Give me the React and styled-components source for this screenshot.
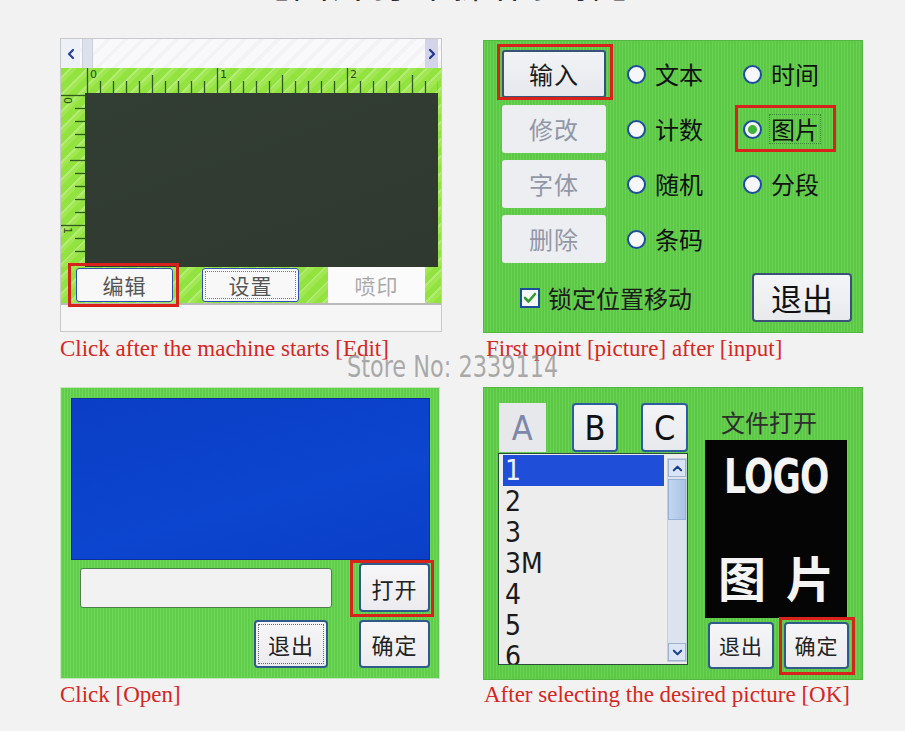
import React from "react";
import styled, { createGlobalStyle, css } from "styled-components";

const CJK = `"Noto Sans CJK SC", "Noto Sans", sans-serif`;
const NARROW = `"Liberation Sans Narrow", "DejaVu Sans Condensed", "Liberation Sans", Arial, sans-serif`;
const RED = "#d8221c";

const GlobalStyle = createGlobalStyle`
  html, body { margin: 0; padding: 0; background: #f2f2f2; }
  body { font-family: ${CJK}; }
  * { box-sizing: border-box; }
`;

const Page = styled.div`
  position: relative;
  width: 905px;
  height: 731px;
  overflow: hidden;
  background: #f2f2f2;
`;

const TitleClip = styled.div`
  height: 38px;
  overflow: hidden;
  display: flex;
  justify-content: center;
`;

const Title = styled.h1`
  margin: -38px 0 0;
  font: 400 36px/40px ${CJK};
  letter-spacing: 4px;
  color: #2a2a2a;
  white-space: nowrap;
`;

const Board = styled.div`
  display: grid;
  grid-template-columns: 382px 380px;
  grid-template-rows: 349px auto;
  column-gap: 41px;
  padding-left: 60px;
`;

const Cell = styled.div`
  display: flex;
  flex-direction: column;
  align-items: flex-start;
  padding-top: ${(p) => p.$offset || 0}px;
`;

const Caption = styled.p`
  margin: ${(p) => (p.$gap ?? 4)}px 0 0 ${(p) => p.$indent || 0}px;
  font: 23px/26px "Liberation Serif", "Times New Roman", serif;
  color: #d7261e;
  white-space: nowrap;
`;

const Watermark = styled.div`
  position: absolute;
  left: 347px;
  top: 350px;
  font: 30px/34px ${NARROW};
  color: rgba(140, 140, 140, 0.72);
  white-space: nowrap;
  transform: scaleX(0.83);
  transform-origin: left center;
  pointer-events: none;
`;

const Highlight = styled.div`
  position: relative;
  display: flex;
  &::after {
    content: "";
    position: absolute;
    inset: ${(p) => p.$inset};
    border: 3px solid ${RED};
    pointer-events: none;
  }
`;

const limeStripes = css`
  background-color: #96e445;
  background-image: repeating-linear-gradient(
    135deg,
    #92e240 0 6px,
    #b3ec74 6px 8px,
    #a0e752 8px 12px
  );
`;

const greenTexture = css`
  background-color: #5fcf48;
  background-image: repeating-linear-gradient(
    90deg,
    rgba(255, 255, 255, 0.07) 0 1px,
    rgba(0, 0, 0, 0.035) 1px 3px
  );
`;

/* ---------- Editor panel (top left) ---------- */

const EditorPanel = styled.div`
  width: 382px;
  height: 294px;
  border: 1px solid #c9c9cc;
  background: #f7f7f7;
  display: flex;
  flex-direction: column;
`;

const ScrollRow = styled.div`
  height: 29px;
  display: flex;
  padding-right: 3px;
  background: repeating-linear-gradient(135deg, #f9f9fb 0 8px, #f3f3f6 8px 12px);
`;

const ScrollArrow = styled.div`
  width: ${(p) => (p.$alt ? 13 : 19)}px;
  display: flex;
  align-items: center;
  justify-content: center;
  background: ${(p) => (p.$alt ? "#d3d3ea" : "#edf0f7")};
`;

const ScrollThumb = styled.div`
  width: 11px;
  margin-left: 2px;
  background: #dde1ea;
  border-left: 1px solid #cbd0dc;
  border-right: 1px solid #cbd0dc;
`;

const ScrollSpace = styled.div`
  flex: 1;
`;

const RulerArea = styled.div`
  display: grid;
  grid-template-columns: 24px 353px 1fr;
  grid-template-rows: 25px 174px;
  ${limeStripes};
`;

const RulerCorner = styled.div`
  grid-column: 1;
  grid-row: 1;
`;

const Screen = styled.div`
  grid-column: 2;
  grid-row: 2;
  background: linear-gradient(160deg, #323d33, #2f3930);
`;

const ButtonRow = styled.div`
  height: 36px;
  display: flex;
  align-items: center;
  gap: 29px;
  padding-left: 15px;
  ${limeStripes};
`;

const EditorButton = styled.div`
  width: 97px;
  height: 34px;
  display: flex;
  align-items: center;
  justify-content: center;
  background: #f8f8f8;
  border: 1px solid #2b50b4;
  border-radius: 3px;
  font: 21px/1 ${CJK};
  color: #555;
  letter-spacing: 1px;
  ${(p) =>
    p.$focus &&
    css`
      outline: 1px dotted #777;
      outline-offset: -4px;
    `}
`;

const PrintCell = styled.div`
  width: 97px;
  align-self: stretch;
  display: flex;
  align-items: center;
  justify-content: center;
  background: #fbfbfb;
  font: 21px/1 ${CJK};
  color: #a9a9a9;
  letter-spacing: 1px;
`;

const StatusBar = styled.div`
  flex: 1;
  background: #f6f6f6;
  border-top: 2px solid #b9b9b9;
`;

const Chevron = ({ dir, color = "#2a3f9f", size = 12 }) => {
  const paths = {
    left: "M8 2 L4 6 L8 10",
    right: "M4 2 L8 6 L4 10",
    up: "M2 8 L6 4 L10 8",
    down: "M2 4 L6 8 L10 4",
  };
  return (
    <svg width={size} height={size} viewBox="0 0 12 12">
      <path d={paths[dir]} fill="none" stroke={color} strokeWidth="2.2" strokeLinecap="round" strokeLinejoin="round" />
    </svg>
  );
};

const HRuler = () => {
  const ticks = [];
  for (let k = 0; k <= 27; k++) {
    const x = 2 + 13 * k + 0.5;
    const y1 = k % 10 === 0 ? 0 : k % 5 === 0 ? 7 : 13;
    ticks.push(<line key={k} x1={x} x2={x} y1={y1} y2={25} stroke="#2f5a20" strokeWidth="1.3" />);
  }
  return (
    <svg width="353" height="25" style={{ gridColumn: 2, gridRow: 1, display: "block" }}>
      {ticks}
      {[0, 1, 2].map((n) => (
        <text key={n} x={2 + 130 * n + 3} y={10} fontSize="11" fill="#2b4a1e" fontFamily="DejaVu Sans, sans-serif">
          {n}
        </text>
      ))}
    </svg>
  );
};

const VRuler = () => {
  const ticks = [];
  for (let k = 0; k <= 13; k++) {
    const y = 2 + 13 * k + 0.5;
    const x1 = k % 10 === 0 ? 0 : k % 5 === 0 ? 9 : 14;
    ticks.push(<line key={k} x1={x1} x2={24} y1={y} y2={y} stroke="#2f5a20" strokeWidth="1.3" />);
  }
  return (
    <svg width="24" height="174" style={{ gridColumn: 1, gridRow: 2, display: "block" }}>
      {ticks}
      {[0, 1].map((n) => (
        <text
          key={n}
          x={0}
          y={0}
          fontSize="11"
          fill="#2b4a1e"
          fontFamily="DejaVu Sans, sans-serif"
          transform={`translate(3 ${4 + 130 * n}) rotate(90)`}
        >
          {n}
        </text>
      ))}
    </svg>
  );
};

/* ---------- Input panel (top right) ---------- */

const InputPanel = styled.div`
  width: 380px;
  height: 293px;
  border: 1px solid #52b83e;
  padding: 9px 10px 10px 18px;
  display: flex;
  flex-direction: column;
  ${greenTexture};
`;

const OptionGrid = styled.div`
  display: grid;
  grid-template-columns: 104px 95px 1fr;
  grid-auto-rows: 48px;
  column-gap: 21px;
  row-gap: 7px;
  align-items: center;
`;

const SideButton = styled.div`
  width: 104px;
  height: 48px;
  display: flex;
  align-items: center;
  justify-content: center;
  font: 24px/1 ${CJK};
  letter-spacing: 1px;
  border-radius: 3px;
  ${(p) =>
    p.$active
      ? css`
          background: linear-gradient(#f2f3f6, #e6e8ee);
          border: 2px solid #3a5278;
          color: #1a1a1a;
        `
      : css`
          background: #eceef1;
          color: #9297a8;
        `}
`;

const Radio = styled.div`
  height: 34px;
  display: flex;
  align-items: center;
  gap: 8px;
  font: 24px/1 ${CJK};
  color: #111;
  white-space: nowrap;
`;

const RadioDot = styled.span`
  width: 19px;
  height: 19px;
  flex: none;
  border-radius: 50%;
  border: 2.5px solid #1d4e9c;
  background: ${(p) =>
    p.$checked ? "radial-gradient(circle, #3fb43a 0 38%, #f3f6f3 46%)" : "#f6f7f8"};
`;

const RadioText = styled.span`
  padding: 2px 1px;
  ${(p) =>
    p.$focus &&
    css`
      outline: 1px dotted #3d8a36;
    `}
`;

const BottomBar = styled.div`
  margin-top: 10px;
  display: flex;
  align-items: center;
  justify-content: space-between;
  padding-left: 18px;
`;

const CheckLabel = styled.div`
  display: flex;
  align-items: center;
  gap: 8px;
  font: 24px/1 ${CJK};
  color: #1b1b1b;
`;

const ExitButton = styled.div`
  width: 100px;
  height: 49px;
  display: flex;
  align-items: center;
  justify-content: center;
  background: linear-gradient(#f4f5f7, #e8eaee);
  border: 2px solid #3a5278;
  border-radius: 4px;
  font: 31px/1 ${CJK};
  color: #111;
`;

const CheckIcon = () => (
  <svg width="20" height="20" viewBox="0 0 20 20">
    <rect x="1" y="1" width="18" height="18" fill="#f6f7f8" stroke="#1d4e9c" strokeWidth="2" />
    <path d="M5 10 L8.5 13.5 L15 6" fill="none" stroke="#2e9e2e" strokeWidth="2.6" strokeLinecap="round" strokeLinejoin="round" />
  </svg>
);

/* ---------- Open panel (bottom left) ---------- */

const OpenPanel = styled.div`
  width: 380px;
  height: 292px;
  border: 1px solid #c6e6bd;
  padding: 10px 9px 10px 10px;
  display: flex;
  flex-direction: column;
  ${greenTexture};
  background-color: #64d44d;
`;

const BlueScreen = styled.div`
  height: 162px;
  border: 1px solid #0a2f9c;
  background: linear-gradient(165deg, #0b3ec6, #0c45cf 60%, #0b3fc8);
`;

const ActionGrid = styled.div`
  margin-top: 3px;
  display: grid;
  grid-template-columns: 261px 71px;
  grid-template-rows: 49px 48px;
  column-gap: 27px;
  row-gap: 8px;
`;

const PathField = styled.div`
  align-self: center;
  height: 40px;
  margin-left: 9px;
  background: #f2f2f2;
  border: 1px solid #4f7f4a;
  border-radius: 3px;
`;

const DialogButton = styled.div`
  width: ${(p) => p.$w || 71}px;
  height: ${(p) => p.$h || 48}px;
  display: flex;
  align-items: center;
  justify-content: center;
  background: linear-gradient(#f6f6f8, #ececf0);
  border: 2px solid #2f5a8a;
  border-radius: 4px;
  font: ${(p) => p.$fs || 22}px/1 ${CJK};
  color: #222;
  letter-spacing: 1px;
  justify-self: ${(p) => (p.$end ? "end" : "start")};
  margin-right: ${(p) => p.$mr || 0}px;
  ${(p) =>
    p.$focus &&
    css`
      outline: 1px dotted #666;
      outline-offset: -5px;
    `}
`;

/* ---------- File panel (bottom right) ---------- */

const FilePanel = styled.div`
  width: 380px;
  height: 293px;
  border: 1px solid #52b83e;
  padding: 15px 0 0 14px;
  display: grid;
  grid-template-columns: 190px 144px;
  column-gap: 17px;
  align-items: start;
  ${greenTexture};
`;

const FileColumn = styled.div`
  display: flex;
  flex-direction: column;
`;

const TabRow = styled.div`
  height: 49px;
  display: flex;
`;

const Tab = styled.div`
  width: 47px;
  height: 49px;
  margin-left: ${(p) => p.$ml}px;
  display: flex;
  align-items: center;
  justify-content: center;
  font: 34px/1 ${NARROW};
  border-radius: 4px;
  ${(p) =>
    p.$current
      ? css`
          background: #e6e8eb;
          color: #7d87a8;
          border-radius: 0;
        `
      : css`
          background: linear-gradient(#f3f4f6, #e7e9ed);
          border: 2px solid #2d5d9e;
          color: #111;
        `}
`;

const ListBox = styled.div`
  margin-top: 1px;
  width: 190px;
  height: 212px;
  border: 1px solid #2b4f3b;
  background: #ededed;
  display: flex;
  overflow: hidden;
`;

const ListItems = styled.div`
  flex: 1;
  padding: 1px 0 0 4px;
`;

const ListItem = styled.div`
  height: 31px;
  padding-left: 2px;
  font: 28px/31px ${NARROW};
  color: ${(p) => (p.$selected ? "#eef2ff" : "#1a1a1a")};
  background: ${(p) => (p.$selected ? "#1f4fd8" : "transparent")};
`;

const ScrollTrack = styled.div`
  width: 20px;
  margin: 4px 0 2px 3px;
  display: flex;
  flex-direction: column;
  background: #dbe3ee;
  border: 1px solid #c5d0df;
`;

const TrackButton = styled.div`
  height: 18px;
  display: flex;
  align-items: center;
  justify-content: center;
  background: #d9e5f6;
  border: 1px solid #9fb2cf;
`;

const TrackThumb = styled.div`
  height: 41px;
  margin-top: 2px;
  background: linear-gradient(90deg, #c3d6ef, #aac4e6);
  border: 1px solid #98b2d6;
`;

const TrackSpace = styled.div`
  flex: 1;
`;

const PreviewColumn = styled.div`
  display: flex;
  flex-direction: column;
`;

const PreviewLabel = styled.div`
  height: 37px;
  padding-left: 16px;
  display: flex;
  align-items: center;
  font: 24px/1 ${CJK};
  color: #2e2e2e;
`;

const PreviewImage = styled.div`
  width: 142px;
  height: 178px;
  background: #050505;
  display: flex;
  flex-direction: column;
  align-items: center;
  padding-top: 11px;
`;

const LogoText = styled.div`
  font: 700 48px/50px ${NARROW};
  letter-spacing: -1px;
  color: #f4f4f4;
  transform: scaleX(0.8);
`;

const PictureText = styled.div`
  margin-top: 51px;
  display: flex;
  gap: 20px;
  font: 700 48px/48px ${CJK};
  color: #f4f4f4;
`;

const PreviewButtons = styled.div`
  margin-top: 4px;
  padding-left: 3px;
  display: flex;
  gap: 10px;
`;

export default function App() {
  return (
    <Page>
      <GlobalStyle />
      <TitleClip>
        <Title>【图片打印操作步骤】</Title>
      </TitleClip>
      <Board>
        <Cell>
          <EditorPanel>
            <ScrollRow>
              <ScrollArrow>
                <Chevron dir="left" />
              </ScrollArrow>
              <ScrollThumb />
              <ScrollSpace />
              <ScrollArrow $alt>
                <Chevron dir="right" color="#23358f" />
              </ScrollArrow>
            </ScrollRow>
            <RulerArea>
              <RulerCorner />
              <HRuler />
              <VRuler />
              <Screen />
            </RulerArea>
            <ButtonRow>
              <Highlight $inset="-5px -6px -5px -8px">
                <EditorButton>编辑</EditorButton>
              </Highlight>
              <EditorButton $focus>设置</EditorButton>
              <PrintCell>喷印</PrintCell>
            </ButtonRow>
            <StatusBar />
          </EditorPanel>
          <Caption>Click after the machine starts [Edit]</Caption>
        </Cell>

        <Cell $offset={2}>
          <InputPanel>
            <OptionGrid>
              <Highlight $inset="-6px -7px -2px -5px">
                <SideButton $active>输入</SideButton>
              </Highlight>
              <Radio>
                <RadioDot />
                <RadioText>文本</RadioText>
              </Radio>
              <Radio>
                <RadioDot />
                <RadioText>时间</RadioText>
              </Radio>

              <SideButton>修改</SideButton>
              <Radio>
                <RadioDot />
                <RadioText>计数</RadioText>
              </Radio>
              <Highlight $inset="-7px -16px -6px -8px" style={{ justifySelf: "start" }}>
                <Radio>
                  <RadioDot $checked />
                  <RadioText $focus>图片</RadioText>
                </Radio>
              </Highlight>

              <SideButton>字体</SideButton>
              <Radio>
                <RadioDot />
                <RadioText>随机</RadioText>
              </Radio>
              <Radio>
                <RadioDot />
                <RadioText>分段</RadioText>
              </Radio>

              <SideButton>删除</SideButton>
              <Radio>
                <RadioDot />
                <RadioText>条码</RadioText>
              </Radio>
            </OptionGrid>
            <BottomBar>
              <CheckLabel>
                <CheckIcon />
                锁定位置移动
              </CheckLabel>
              <ExitButton>退出</ExitButton>
            </BottomBar>
          </InputPanel>
          <Caption $indent={3} $gap={3}>
            First point [picture] after [input]
          </Caption>
        </Cell>

        <Cell>
          <OpenPanel>
            <BlueScreen />
            <ActionGrid>
              <PathField />
              <Highlight $inset="-3px -4px -5px -9px">
                <DialogButton $h={49}>打开</DialogButton>
              </Highlight>
              <DialogButton $w={74} $end $mr={4} $focus>
                退出
              </DialogButton>
              <DialogButton>确定</DialogButton>
            </ActionGrid>
          </OpenPanel>
          <Caption $gap={3}>Click [Open]</Caption>
        </Cell>

        <Cell>
          <FilePanel>
            <FileColumn>
              <TabRow>
                <Tab $current $ml={1}>A</Tab>
                <Tab $ml={26}>B</Tab>
                <Tab $ml={23}>C</Tab>
              </TabRow>
              <ListBox>
                <ListItems>
                  <ListItem $selected>1</ListItem>
                  <ListItem>2</ListItem>
                  <ListItem>3</ListItem>
                  <ListItem>3M</ListItem>
                  <ListItem>4</ListItem>
                  <ListItem>5</ListItem>
                  <ListItem>6</ListItem>
                </ListItems>
                <ScrollTrack>
                  <TrackButton>
                    <Chevron dir="up" color="#1e3f8a" size={11} />
                  </TrackButton>
                  <TrackThumb />
                  <TrackSpace />
                  <TrackButton>
                    <Chevron dir="down" color="#1e3f8a" size={11} />
                  </TrackButton>
                </ScrollTrack>
              </ListBox>
            </FileColumn>
            <PreviewColumn>
              <PreviewLabel>文件打开</PreviewLabel>
              <PreviewImage>
                <LogoText>LOGO</LogoText>
                <PictureText>
                  <span>图</span>
                  <span>片</span>
                </PictureText>
              </PreviewImage>
              <PreviewButtons>
                <DialogButton $w={66} $h={47} $fs={21}>
                  退出
                </DialogButton>
                <Highlight $inset="-5px -6px -6px -5px">
                  <DialogButton $w={65} $h={47} $fs={21}>
                    确定
                  </DialogButton>
                </Highlight>
              </PreviewButtons>
            </PreviewColumn>
          </FilePanel>
          <Caption $gap={2} $indent={1}>
            After selecting the desired picture [OK]
          </Caption>
        </Cell>
      </Board>
      <Watermark>Store No: 2339114</Watermark>
    </Page>
  );
}
